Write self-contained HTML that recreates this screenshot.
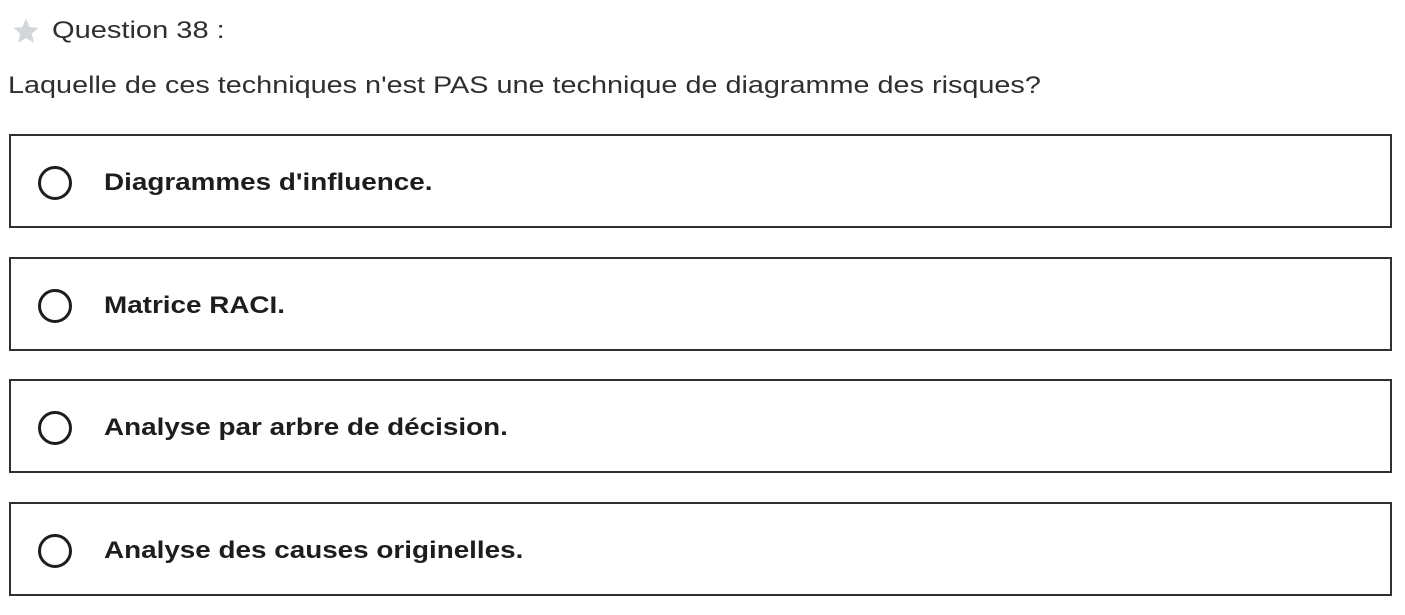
<!DOCTYPE html>
<html><head><style>
body{margin:0;width:1405px;height:615px;background:#fff;font-family:"Liberation Sans",sans-serif;position:relative;overflow:hidden}
.q{position:absolute;left:52px;top:17px;font-size:24px;color:#2d2f31;transform:scaleX(1.21);transform-origin:0 0}
.star{position:absolute;left:11px;top:16px}
.t{position:absolute;left:8px;top:72px;font-size:24px;color:#2d2f31;transform:scaleX(1.2);transform-origin:0 0;white-space:nowrap}
.b{position:absolute;left:9px;width:1379px;height:90px;border:2px solid #2d2f31;box-sizing:content-box}
.c{position:absolute;left:27px;top:30px;width:34px;height:34px;border:3px solid #1c1d1f;border-radius:50%;box-sizing:border-box}
.l{position:absolute;left:93px;top:33px;font-size:24px;font-weight:bold;color:#1c1d1f;transform:scaleX(1.16);transform-origin:0 0;white-space:nowrap}
</style></head><body>
<svg class="star" width="30" height="30" viewBox="0 0 24 24"><path d="M12 2l2.9 6.9 7.1.6-5.4 4.7 1.7 7.2L12 17.6 5.7 21.4l1.7-7.2L2 9.5l7.1-.6z" fill="#d1d7dc"/></svg>
<div class="q">Question 38 :</div>
<div class="t">Laquelle de ces techniques n'est PAS une technique de diagramme des risques?</div>
<div class="b" style="top:134px"><div class="c"></div><div class="l">Diagrammes d'influence.</div></div>
<div class="b" style="top:257px"><div class="c"></div><div class="l">Matrice RACI.</div></div>
<div class="b" style="top:379px"><div class="c"></div><div class="l">Analyse par arbre de décision.</div></div>
<div class="b" style="top:502px"><div class="c"></div><div class="l">Analyse des causes originelles.</div></div>
</body></html>
